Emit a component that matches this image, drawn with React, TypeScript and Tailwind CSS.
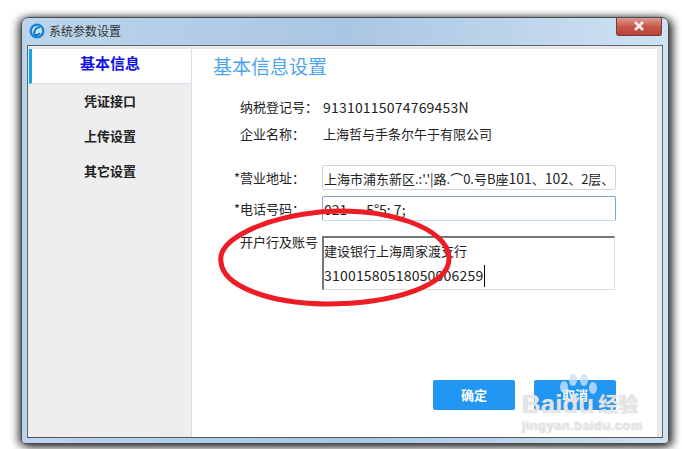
const CJK = "font-['Noto_Sans_CJK_SC',sans-serif]";

function Row({ label, children }: { label: string; children: React.ReactNode }) {
  return (
    <div className="flex h-5 items-center whitespace-nowrap text-[13px] text-[#222]">
      <span className="w-[84px] pl-[1px]">{label}</span>
      <span>{children}</span>
    </div>
  );
}

function Field({ label, children, active }: { label: string; children: React.ReactNode; active?: boolean }) {
  return (
    <div className="flex items-center whitespace-nowrap text-[13px] text-[#222]">
      <span className="w-[88px] text-left">{label}</span>
      <div
        className={`h-[25px] w-[294px] overflow-hidden rounded-[2px] border px-[1px] pt-[1px] leading-[23px] ${
          active ? "border-[#7fa6c9] border-b-[#c6d9ea]" : "border-[#d5d5d5]"
        }`}
      >
        {children}
      </div>
    </div>
  );
}

export default function App() {
  return (
    <div className={`relative h-[449px] w-[682px] overflow-hidden bg-white ${CJK}`}>
      {/* window */}
      <div className="ml-[21px] mt-[17px] flex h-[427px] w-[648px] flex-col rounded-t-[7px] rounded-b-[4px] border border-[#4a4f55] bg-gradient-to-r from-[#bcd5ec] via-[#a9c6e2] to-[#cfe2f3] px-[5px] pb-[5px] shadow-[-3px_1px_9px_rgba(0,0,0,0.65),4px_2px_9px_rgba(0,0,0,0.75)]">
        {/* title bar */}
        <div className="flex h-[27px] shrink-0 items-center">
          <svg width="16" height="16" viewBox="0 0 16 16" className="ml-[2px] mt-[-1px]">
            <circle cx="8" cy="8" r="7.5" fill="#1b86d8" />
            <circle cx="8" cy="8" r="5" fill="#bfe6f8" />
            <path d="M11 4.500C7.500 3.500 4.500 8 5.500 11c1 2 4 1 5.500-1" fill="none" stroke="#0f6fc0" strokeWidth="1.800" />
          </svg>
          <span className="ml-[4px] mt-[-1px] text-[12px] text-[#333]">系统参数设置</span>
          <div className="ml-auto mr-[1px] mt-[-10px] flex h-[18px] w-[46px] items-center justify-center rounded-b-[3px] border border-t-0 border-[#7a3b35] bg-gradient-to-b from-[#dc9a90] via-[#c8584a] to-[#b8443a]">
            <svg width="12" height="10" viewBox="0 0 12 10">
              <path d="M2 1l8 8M10 1l-8 8" stroke="#eee" strokeWidth="2.600" />
            </svg>
          </div>
        </div>
        {/* client */}
        <div className="flex min-h-0 flex-1 border border-[#5f666d] border-b-[#555] bg-[#e9e9e9] pt-[3px] pr-[5px] pl-[1px]">
          {/* sidebar */}
          <div className="flex w-[163px] shrink-0 flex-col border-r border-[#d9dfea] bg-[#eeeeee] text-center text-[13px] font-bold text-[#222]">
            <div className="flex h-[35px] items-center justify-center border-b border-[#d9dfea] border-l-[3px] border-l-[#12a3f0] bg-white pb-[5px] pr-[3px] text-[15px] text-[#1414e0]">
              基本信息
            </div>
            <div className="flex h-[35px] items-center justify-center pb-[2px]">凭证接口</div>
            <div className="flex h-[35px] items-center justify-center pb-[2px]">上传设置</div>
            <div className="flex h-[35px] items-center justify-center pb-[2px]">其它设置</div>
          </div>
          {/* content */}
          <div className="flex min-w-0 flex-1 flex-col bg-white pl-[21px]">
            <div className="mt-[4px] text-[19px] leading-[26px] text-[#4da3ee]">基本信息设置</div>
            <div className="ml-[26px] mt-[18px] flex flex-col gap-[7px]">
              <Row label="纳税登记号：">
                <span className="text-[14px] tracking-[0.2px]">91310115074769453N</span>
              </Row>
              <Row label="企业名称：">上海哲与手条尔午于有限公司</Row>
            </div>
            <div className="ml-[21px] mt-[21px] flex flex-col gap-[6px]">
              <Field label="*营业地址：">
                上海市浦东新区.:'.'|路.⌒0.号B座<span className="text-[14px]">101</span>、<span className="text-[14px]">102</span>、2层、
              </Field>
              <Field label="*电话号码：" active>
                <span className="whitespace-pre text-[14px]">021      5°5; 7;</span>
              </Field>
            </div>
            <div className="ml-[27px] mt-[15px] flex items-start whitespace-nowrap text-[13px] text-[#222]">
              <span className="w-[82px] leading-[12px]">开户行及账号</span>
              <div className="h-[54px] w-[293px] border-2 border-b border-r border-[#777] border-r-[#ddd] border-b-[#ddd] leading-[25px]">
                <div>建设银行上海周家渡支行</div>
                <div className="flex items-center text-[14px] tracking-[0.2px]">
                  31001580518050006259
                  <span className="ml-[1px] h-[22px] w-[1px] bg-black" />
                </div>
              </div>
            </div>
            <div className="mt-auto mb-[27px] ml-[220px] flex gap-[19px]">
              <button className="h-[30px] w-[82px] rounded-[2px] bg-[#2196f3] text-[13px] font-bold text-white">确定</button>
              <button className="h-[30px] w-[82px] rounded-[2px] bg-[#2196f3] text-[13px] font-bold text-white">取消</button>
            </div>
          </div>
        </div>
      </div>

      {/* red hand-drawn circle */}
      <svg className="absolute left-0 top-0" width="682" height="449" viewBox="0 0 682 449">
        <path
          d="M221 262C217 240 262 218 320 212C385 206 449 228 449 258C450 285 395 304 325 304C268 303 223 286 221 262Z"
          fill="none"
          stroke="#ee1c25"
          strokeWidth="5"
        />
      </svg>

      {/* watermark */}
      <div className="absolute left-[522px] top-[374px] w-[126px]">
        <svg width="44" height="26" viewBox="0 0 44 26" className="ml-[34px] block opacity-80">
          <ellipse cx="8" cy="13" rx="4" ry="6" fill="#c9e2f6" />
          <ellipse cx="17" cy="6" rx="4" ry="6" fill="#c9e2f6" />
          <ellipse cx="28" cy="6" rx="4" ry="6" fill="#c9e2f6" />
          <ellipse cx="37" cy="14" rx="4" ry="6" fill="#c9e2f6" />
        </svg>
        <div className="mt-[-8px] flex items-end whitespace-nowrap font-['Liberation_Sans',sans-serif] text-[26px] font-bold leading-[24px] text-white/70 [text-shadow:0_0_1px_#aaa]">
          Baidu
          <span className={`ml-[4px] text-[20px] ${CJK}`}>经验</span>
        </div>
        <div className="mt-[2px] whitespace-nowrap font-['Liberation_Sans',sans-serif] text-[13px] font-bold leading-[16px] tracking-[0.4px] text-white/70 [text-shadow:0_0_1px_#aaa]">
          jingyan.baidu.com
        </div>
      </div>
    </div>
  );
}
